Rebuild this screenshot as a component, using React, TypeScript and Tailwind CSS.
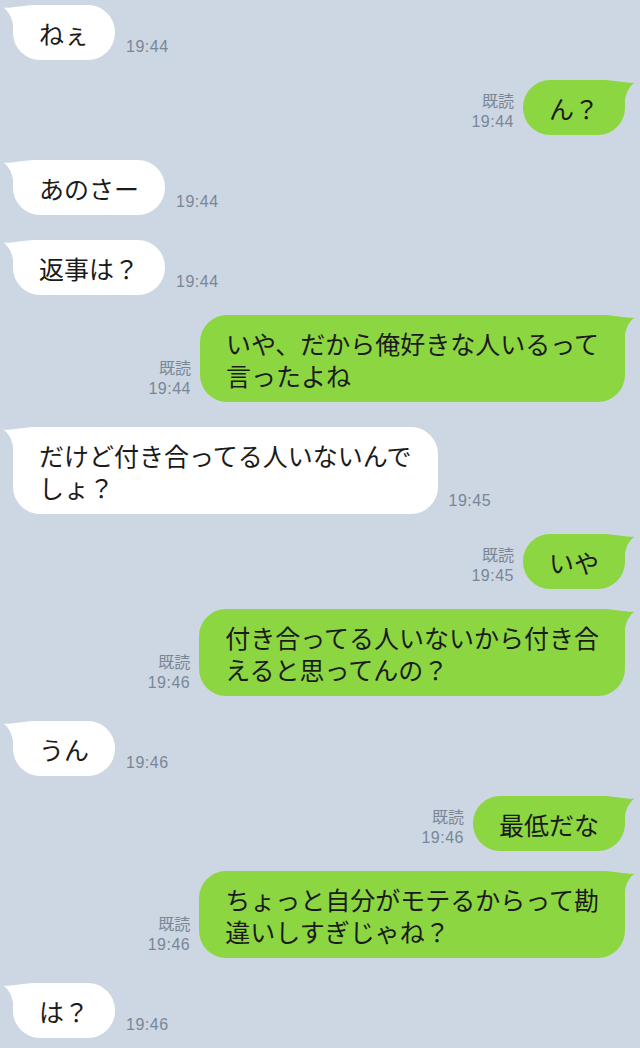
import React from "react";

type Msg = { side: "L" | "R"; lines: string[]; time: string };

const msgs: Msg[] = [
  { side: "L", lines: ["ねぇ"], time: "19:44" },
  { side: "R", lines: ["ん？"], time: "19:44" },
  { side: "L", lines: ["あのさー"], time: "19:44" },
  { side: "L", lines: ["返事は？"], time: "19:44" },
  { side: "R", lines: ["いや、だから俺好きな人いるって", "言ったよね"], time: "19:44" },
  { side: "L", lines: ["だけど付き合ってる人いないんで", "しょ？"], time: "19:45" },
  { side: "R", lines: ["いや"], time: "19:45" },
  { side: "R", lines: ["付き合ってる人いないから付き合", "えると思ってんの？"], time: "19:46" },
  { side: "L", lines: ["うん"], time: "19:46" },
  { side: "R", lines: ["最低だな"], time: "19:46" },
  { side: "R", lines: ["ちょっと自分がモテるからって勘", "違いしすぎじゃね？"], time: "19:46" },
  { side: "L", lines: ["は？"], time: "19:46" },
];

function Tail({ color, right }: { color: string; right?: boolean }) {
  return (
    <svg
      width="40"
      height="30"
      viewBox="0 0 40 30"
      className={
        right
          ? "absolute top-0 right-[-10px] -scale-x-100"
          : "absolute top-0 left-[-10px]"
      }
    >
      <path
        d="M0.5 2.5 C 8 3.8, 16 0, 36 0 L 36 30 L 10 30 L 10 20 C 9 12, 5 6, 0.5 2.5 Z"
        fill={color}
      />
    </svg>
  );
}

function Bubble({ m }: { m: Msg }) {
  const green = m.side === "R";
  const color = green ? "#8cd641" : "#ffffff";
  return (
    <div
      className={
        "relative rounded-[27px] px-[26px] pt-[12px] pb-[11px] text-[25px] leading-[32px] text-[#1b1b1b] whitespace-nowrap " +
        (green ? "bg-[#8cd641]" : "bg-white")
      }
    >
      <Tail color={color} right={green} />
      <div className="relative">
        {m.lines.map((l, i) => (
          <div key={i}>{l}</div>
        ))}
      </div>
    </div>
  );
}

export default function App() {
  return (
    <div
      className="w-[640px] h-[1048px] overflow-hidden bg-[#ccd7e3] pt-[5px]"
      style={{ fontFamily: '"Noto Sans CJK JP", "Noto Sans", sans-serif' }}
    >
      {msgs.map((m, i) => {
        const mt = i === 0 ? "" : m.side === "L" ? "mt-[25px]" : "mt-[20px]";
        if (m.side === "L") {
          return (
            <div key={i} className={"flex items-end pl-[13px] " + mt}>
              <Bubble m={m} />
              <div
                className="ml-[11px] mb-[3px] text-[16px] leading-[20px] tracking-[0.5px] text-[#7a8696]"
                style={{ fontFamily: '"Liberation Sans", "Noto Sans CJK JP", sans-serif' }}
              >
                {m.time}
              </div>
            </div>
          );
        }
        return (
          <div key={i} className={"flex items-end justify-end pr-[15px] " + mt}>
            <div
              className="mr-[9px] mb-[3px] text-right text-[16px] leading-[20px] tracking-[0.5px] text-[#7a8696]"
              style={{ fontFamily: '"Liberation Sans", "Noto Sans CJK JP", sans-serif' }}
            >
              <div className="tracking-normal">既読</div>
              <div>{m.time}</div>
            </div>
            <Bubble m={m} />
          </div>
        );
      })}
    </div>
  );
}
